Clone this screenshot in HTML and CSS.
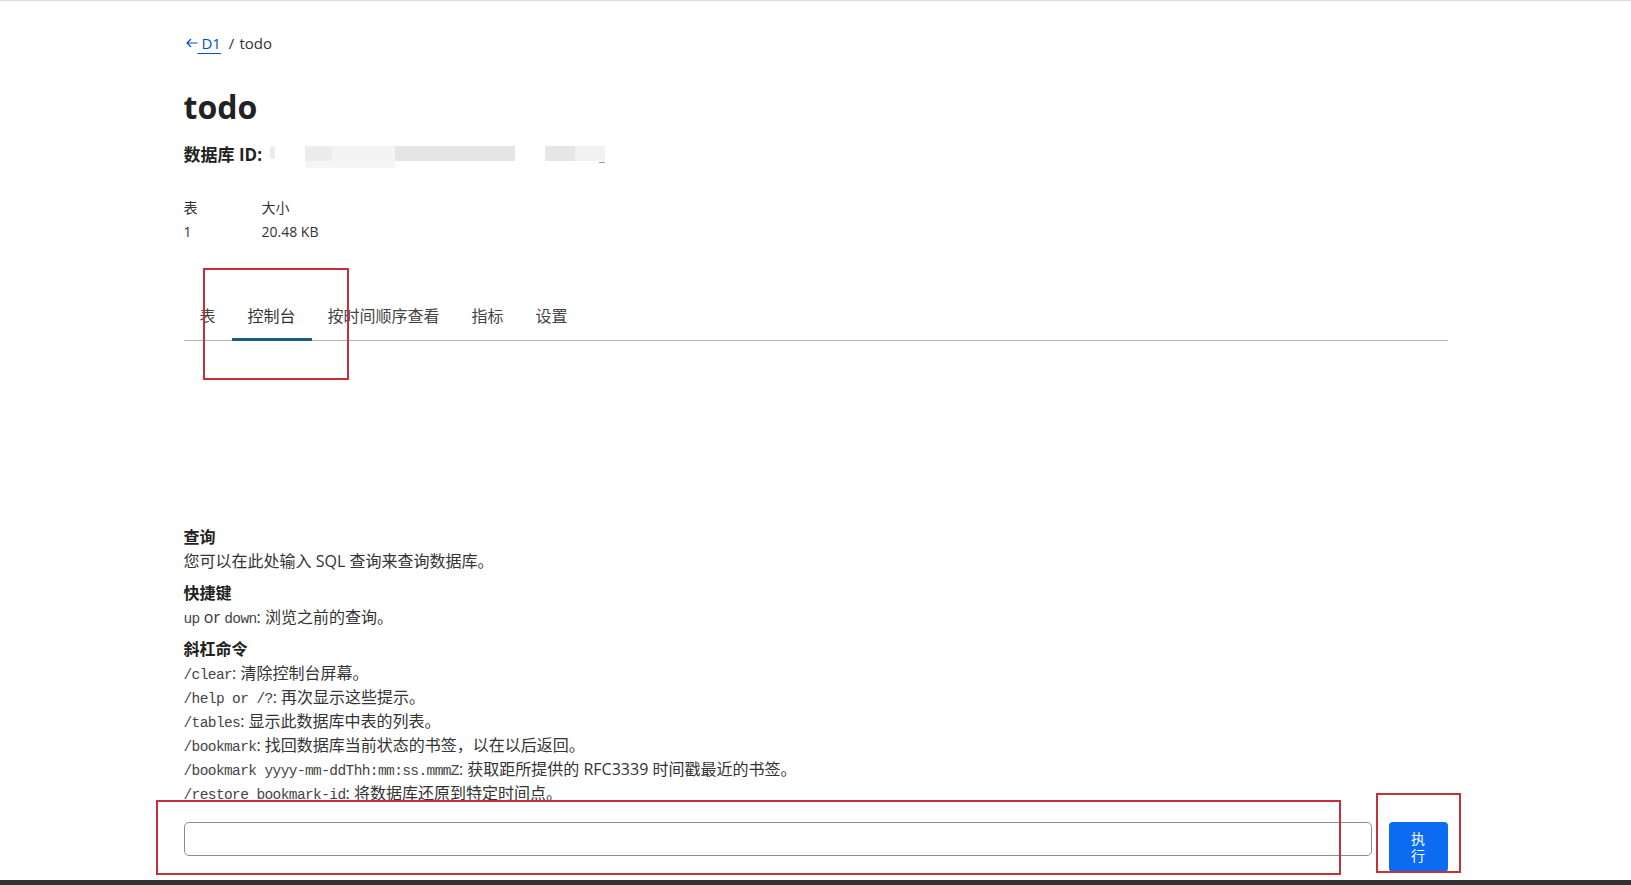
FILE: index.html
```html
<!DOCTYPE html>
<html lang="zh-CN">
<head>
<meta charset="utf-8">
<title>todo</title>
<link rel="stylesheet" href="styles.css">
</head>
<body>
<div class="page">
  <div class="container header">
    <nav class="crumbs">
      <a class="back" href="#"><svg class="arrow" width="12" height="10" viewBox="0 0 12 10"><path d="M11.5 5H1M5 1L1 5l4 4" fill="none" stroke="#0051c3" stroke-width="1.2"/></svg><span class="link">&nbsp;D1</span></a>
      <span class="sep">/</span>
      <span class="crumb-current">todo</span>
    </nav>
    <h1 class="title">todo</h1>
    <div class="dbid">
      <span class="dbid-label">数据库 ID:</span>
      <span class="blur">
        <span class="blur-dot"></span>
        <span class="blur-a"><span class="blur-a-top"></span><span class="blur-a-bottom"></span></span>
        <span class="blur-b"></span>
        <span class="blur-us"></span>
      </span>
    </div>
    <div class="stats">
      <div class="stat stat-first"><div class="stat-label">表</div><div class="stat-value">1</div></div>
      <div class="stat"><div class="stat-label">大小</div><div class="stat-value">20.48 KB</div></div>
    </div>
    <div class="tabs">
      <span class="tab">表</span>
      <span class="tab tab-active">控制台</span>
      <span class="tab">按时间顺序查看</span>
      <span class="tab">指标</span>
      <span class="tab">设置</span>
    </div>
  </div>
  <div class="container console">
    <div class="console-body">
      <div class="help-head">查询</div>
      <div class="help-line">您可以在此处输入 SQL 查询来查询数据库。</div>
      <div class="help-head spaced">快捷键</div>
      <div class="help-line"><code>up</code> or <code>down</code>: 浏览之前的查询。</div>
      <div class="help-head spaced">斜杠命令</div>
      <div class="help-line"><code>/clear</code>: 清除控制台屏幕。</div>
      <div class="help-line"><code>/help or /?</code>: 再次显示这些提示。</div>
      <div class="help-line"><code>/tables</code>: 显示此数据库中表的列表。</div>
      <div class="help-line"><code>/bookmark</code>: 找回数据库当前状态的书签，以在以后返回。</div>
      <div class="help-line"><code>/bookmark yyyy-mm-ddThh:mm:ss.mmmZ</code>: 获取距所提供的 RFC3339 时间戳最近的书签。</div>
      <div class="help-line"><code>/restore bookmark-id</code>: 将数据库还原到特定时间点。</div>
    </div>
  </div>
  <div class="container query">
    <input class="query-input" type="text" aria-label="SQL">
    <button class="run" type="button">执行</button>
  </div>
  <div class="bottom-bar"></div>

  <div class="mark mark-tab"></div>
  <div class="mark mark-input"></div>
  <div class="mark mark-button"></div>
</div>
</body>
</html>
```
FILE: styles.css
```css
* { box-sizing: border-box; }
html, body { margin: 0; padding: 0; background: #fff; }
body {
  font-family: "Open Sans", "Noto Sans CJK SC", sans-serif;
  color: #333;
  font-size: 15px;
}
.page {
  position: relative;
  height: 100vh;
  display: flex;
  flex-direction: column;
  border-top: 1px solid #d9d9d9;
  overflow: hidden;
}
.container {
  width: 1264px;
  margin: 0 auto;
}
.header { flex: none; padding-top: 32px; }

.crumbs {
  display: flex;
  align-items: center;
  height: 20px;
  line-height: 20px;
  font-size: 15px;
}
.back {
  display: flex;
  align-items: center;
  color: #0051c3;
  text-decoration: none;
  padding-left: 2px;
}
.arrow { display: block; }
.link {
  text-decoration: underline;
  text-underline-offset: 4px;
  text-decoration-thickness: 1px;
}
.sep { margin-left: 8px; margin-right: 5px; }
.crumb-current { color: #333; }

.title {
  margin: 34px 0 0;
  height: 40px;
  font-size: 32px;
  line-height: 40px;
  font-weight: 700;
  color: #222;
}

.dbid {
  margin-top: 16px;
  display: flex;
  align-items: flex-start;
  height: 24px;
}
.dbid-label {
  font-size: 17px;
  font-weight: 700;
  line-height: 24px;
  color: #222;
}
.blur {
  display: flex;
  align-items: flex-start;
  margin-left: 8px;
  padding-top: 3px;
}
.blur-dot {
  width: 5px; height: 13px;
  border-radius: 3px;
  background: #ebebeb;
}
.blur-a {
  margin-left: 30px;
  width: 210px;
  display: flex;
  flex-direction: column;
}
.blur-a-top {
  height: 15px;
  background: linear-gradient(to right, #ececec 0 13%, #f4f4f4 13% 43%, #e5e5e5 43% 100%);
}
.blur-a-bottom {
  width: 90px;
  height: 7px;
  background: #f5f5f5;
}
.blur-b {
  margin-left: 30px;
  width: 60px;
  height: 15px;
  background: linear-gradient(to right, #e6e6e6 0 50%, #f1f1f1 50% 100%);
}
.blur-us {
  margin-left: -6px;
  margin-top: 16px;
  width: 6px;
  height: 1px;
  background: #9a9a9a;
}

.stats {
  margin-top: 29px;
  display: flex;
  font-size: 14px;
  line-height: 24px;
}
.stat-label, .stat-value { height: 24px; }
.stat-first { width: 78px; }

.tabs {
  margin-top: 52px;
  display: flex;
  border-bottom: 1px solid #b5b5b5;
}
.tab {
  padding: 8px 16px 10px;
  height: 45px;
  font-size: 16px;
  line-height: 24px;
  color: #444;
  border-bottom: 3px solid transparent;
  margin-bottom: -1px;
}
.tab-active {
  color: #333;
  border-bottom-color: #1d5b87;
}

.console {
  flex: 1;
  display: flex;
  flex-direction: column;
  justify-content: flex-end;
  min-height: 0;
}
.help-head {
  height: 24px;
  font-size: 16px;
  font-weight: 700;
  line-height: 24px;
  color: #222;
}
.help-head.spaced { margin-top: 8px; }
.help-line {
  height: 24px;
  font-size: 16px;
  line-height: 24px;
  color: #333;
  white-space: nowrap;
}
code {
  font-family: "Liberation Mono", "DejaVu Sans Mono", monospace;
  font-size: 14.5px;
  letter-spacing: -0.6px;
  line-height: 1;
  color: #444;
}

.query {
  flex: none;
  margin-top: 17px;
  margin-bottom: 8px;
  display: flex;
  align-items: flex-start;
  gap: 17px;
}
.query-input {
  flex: 1;
  height: 34px;
  border: 1px solid #8c8c8c;
  border-radius: 5px;
  background: #fff;
  font: inherit;
  padding: 0 8px;
}
.run {
  width: 59px;
  height: 50px;
  padding: 0 22px;
  border: none;
  border-radius: 4px;
  background: #0b6cf2;
  color: #fff;
  font-family: "Noto Sans CJK SC", sans-serif;
  font-size: 14px;
  line-height: 17px;
  cursor: pointer;
}
.bottom-bar {
  flex: none;
  height: 5px;
  background: #323232;
}

.mark {
  position: absolute;
  border: 2px solid #c6303a;
  pointer-events: none;
}
.mark-tab { left: 203px; top: 267px; width: 146px; height: 112px; }
.mark-input { left: 156px; top: 799px; width: 1185px; height: 75px; }
.mark-button { left: 1376px; top: 792px; width: 85px; height: 80px; }
```
